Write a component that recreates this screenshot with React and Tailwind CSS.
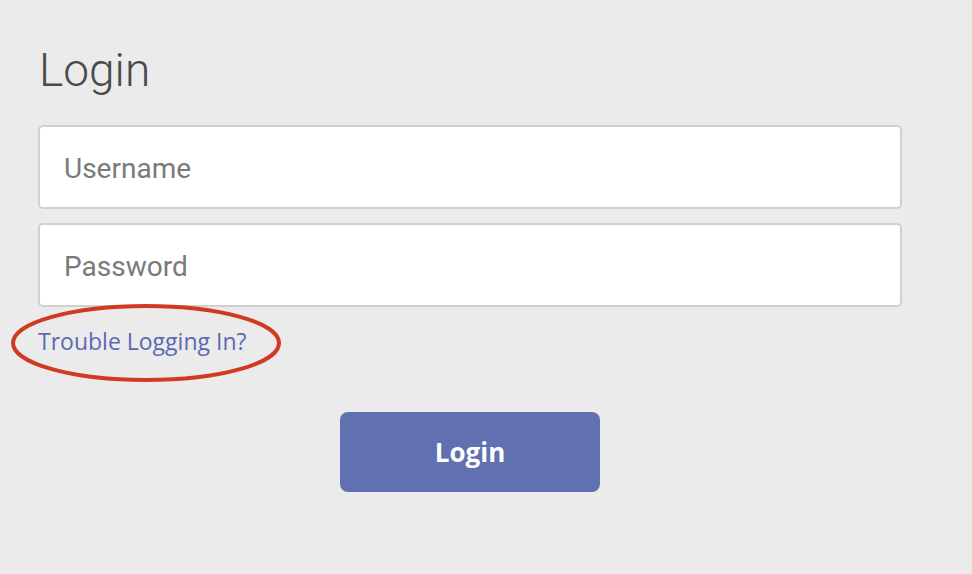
import React from "react";

export default function App() {
  return (
    <div className="w-[972px] h-[574px] bg-[#ebebeb] overflow-hidden" style={{ fontFamily: "Roboto, sans-serif" }}>
      <div className="pl-[38px] pr-[70px] pt-[40px]">
        <h1 className="text-[46px] leading-[60px] font-light text-[#4a4a4a] pl-[1px]">Login</h1>
        <div className="mt-[25px] flex flex-col gap-[14px]">
          <div className="h-[84px] bg-white border-2 border-[#d0d0d0] rounded-[5px] flex items-center pl-[24px] pt-[4px]">
            <span className="text-[28px] text-[#7a7a7a]">Username</span>
          </div>
          <div className="h-[84px] bg-white border-2 border-[#d0d0d0] rounded-[5px] flex items-center pl-[24px] pt-[4px]">
            <span className="text-[28px] text-[#7a7a7a]">Password</span>
          </div>
        </div>
        <div className="relative mt-[20px] h-[30px]">
          <svg className="absolute left-[-28px] top-[-24px]" width="272" height="80" viewBox="0 0 272 80">
            <ellipse cx="136" cy="40" rx="133" ry="37" fill="none" stroke="#d13a22" strokeWidth="4" />
          </svg>
          <a className="relative text-[23px] leading-[28px] text-[#5c69b3]" style={{ fontFamily: "'Open Sans', sans-serif" }}>Trouble Logging In?</a>
        </div>
        <div className="mt-[55px] flex justify-center">
          <button className="w-[260px] h-[80px] rounded-[8px] bg-[#6170b0] text-white text-[26px] font-bold" style={{ fontFamily: "'Open Sans', sans-serif" }}>Login</button>
        </div>
      </div>
    </div>
  );
}
